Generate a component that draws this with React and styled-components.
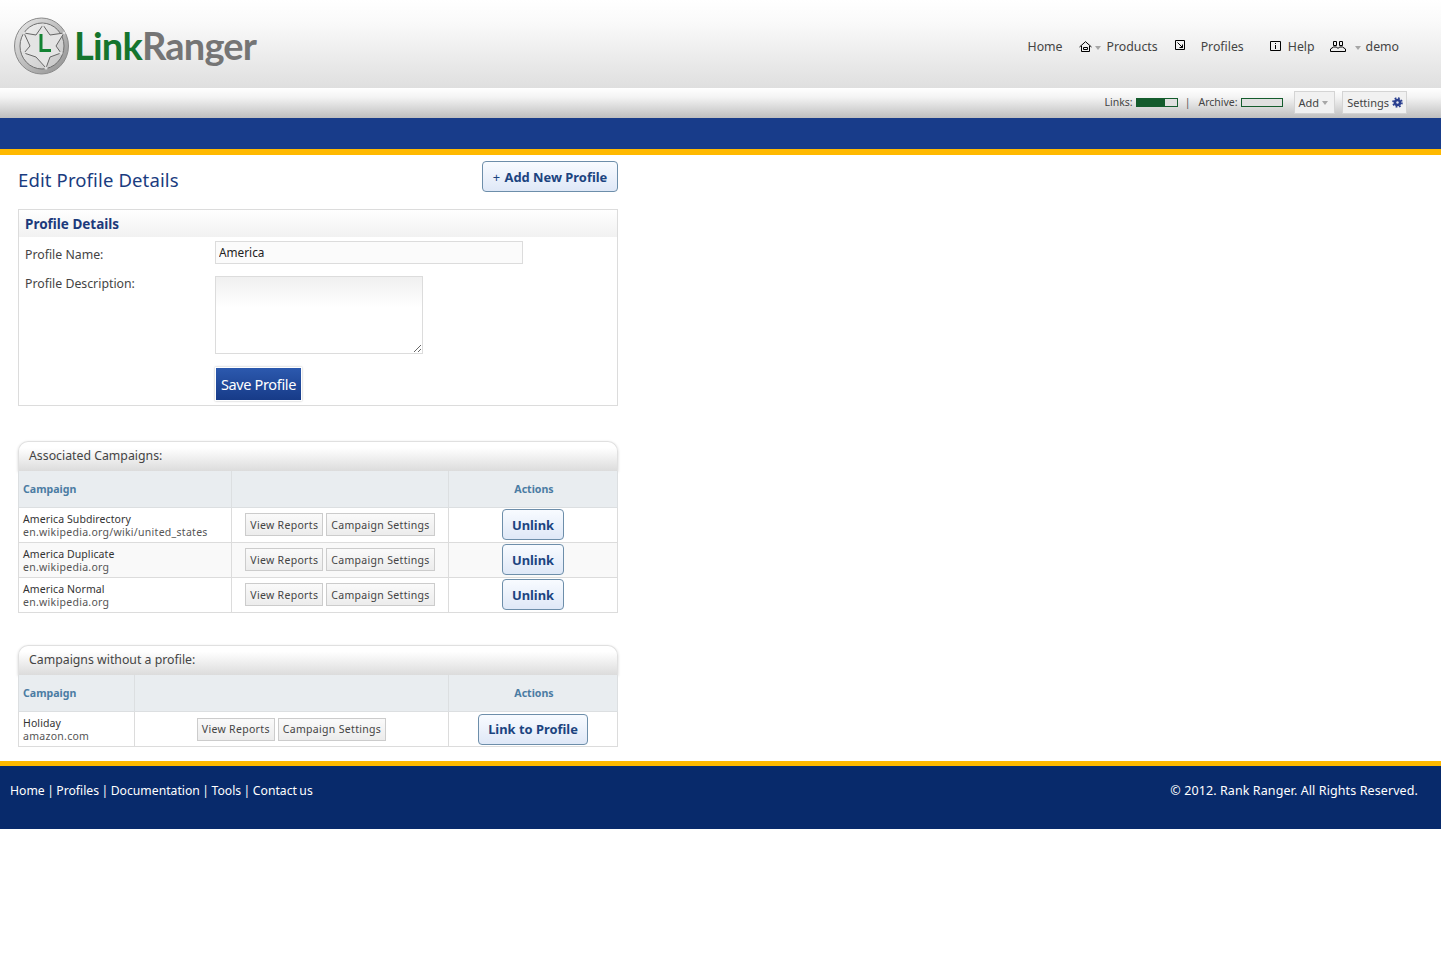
import React from 'react';
import styled, { createGlobalStyle } from 'styled-components';

const GlobalStyle = createGlobalStyle`
  html, body {
    margin: 0;
    padding: 0;
    background: #fff;
    font-family: "Noto Sans", "Open Sans", "Liberation Sans", sans-serif;
    font-size: 12px;
    color: #333;
  }
  * { box-sizing: border-box; }
`;

const associated = [
  { name: 'America Subdirectory', url: 'en.wikipedia.org/wiki/united_states' },
  { name: 'America Duplicate', url: 'en.wikipedia.org' },
  { name: 'America Normal', url: 'en.wikipedia.org' }
];

const Header = styled.header`
  height: 88px;
  padding: 0 42px 0 13px;
  display: flex;
  align-items: flex-start;
  justify-content: space-between;
  background: linear-gradient(#fff 0%, #fafafa 25%, #dfdfdf 100%);
`;

const Logo = styled.div`
  display: flex;
  align-items: center;
  gap: 4px;
  padding-top: 17px;
`;

const LogoText = styled.div`
  font-family: Lato, "Open Sans", sans-serif;
  font-weight: 700;
  font-size: 38px;
  line-height: 44px;
  letter-spacing: -0.8px;
  margin-top: -3px;
  color: #757575;
  span { color: #15752d; }
`;

const Nav = styled.nav`
  display: flex;
  align-items: center;
  height: 20px;
  margin-top: 37px;
`;

const NavLink = styled.a`
  font-size: 12.3px;
  line-height: 20px;
  color: #444;
  margin-left: ${p => p.$left || 0}px;
`;

const NavIcon = styled.svg`
  display: block;
  flex: none;
  margin-left: ${p => p.$left || 0}px;
  margin-top: ${p => p.$top || 0}px;
`;

const Caret = styled.i`
  display: block;
  width: 0;
  height: 0;
  margin-left: ${p => p.$left || 0}px;
  margin-right: ${p => p.$right || 0}px;
  margin-top: 2px;
  border-left: 3px solid transparent;
  border-right: 3px solid transparent;
  border-top: 4px solid #a6a6a6;
`;

const SubBar = styled.div`
  height: 30px;
  padding-right: 34px;
  display: flex;
  align-items: center;
  justify-content: flex-end;
  background: linear-gradient(#fff 0%, #f4f4f4 30%, #bfbfbf 100%);
`;

const Meter = styled.span`
  display: flex;
  align-items: center;
  padding-bottom: 2px;
  font-size: 10.5px;
  color: #444;
  margin-right: ${p => p.$right || 0}px;
`;

const MeterBar = styled.i`
  display: block;
  width: 42px;
  height: 9px;
  margin-left: 3px;
  border: 1px solid #145c2d;
  background: #e0e0e0;
  b {
    display: block;
    height: 100%;
    background: #145c2d;
  }
`;

const Divider = styled.span`
  padding-bottom: 2px;
  font-size: 10.5px;
  color: #555;
  margin-right: 8px;
`;

const BarButton = styled.button`
  display: flex;
  align-items: center;
  height: 23px;
  margin-left: ${p => p.$left || 0}px;
  margin-bottom: 2px;
  padding: 0 ${p => p.$right}px 0 4px;
  border: 1px solid #d4d4d4;
  background: #f1f1f1;
  font: inherit;
  font-size: 11px;
  color: #444;
  svg { display: block; margin-left: 3px; }
`;

const BlueBand = styled.div`
  height: 37px;
  background: #183c8a;
  border-bottom: 6px solid #ffb900;
`;

const Main = styled.main`
  width: 636px;
  padding: 0 18px;
`;

const TitleRow = styled.div`
  height: 54px;
  display: flex;
  align-items: flex-start;
  justify-content: space-between;
`;

const Title = styled.h1`
  margin: 13px 0 0;
  font-size: 18.5px;
  line-height: 24px;
  font-weight: 400;
  letter-spacing: 0.13px;
  color: #1a3c80;
`;

const BlueButton = styled.button`
  height: 31px;
  width: ${p => p.$width}px;
  margin-top: ${p => p.$top || 0}px;
  padding: 0;
  border: 1px solid #6d8eaa;
  border-radius: 4px;
  background: linear-gradient(#f8fbff, #dfe8f7);
  font: inherit;
  font-size: 12.9px;
  font-weight: 700;
  color: #1b4480;
`;

const Plus = styled.span`
  font-weight: 400;
  margin-right: 1px;
`;

const Panel = styled.section`
  height: 197px;
  border: 1px solid #dcdcdc;
`;

const PanelHead = styled.div`
  height: 27px;
  padding-left: 6px;
  font-size: 13.5px;
  line-height: 28px;
  font-weight: 700;
  color: #1c3a7c;
  background: linear-gradient(#fff, #f1f1f1);
`;

const Form = styled.div`
  display: grid;
  grid-template-columns: 190px 1fr;
  padding: 4px 0 0 6px;
  align-items: start;
`;

const Label = styled.label`
  font-size: 12.3px;
  line-height: 18px;
  color: #444;
  margin-top: ${p => p.$top || 0}px;
`;

const TextInput = styled.input`
  display: block;
  width: 308px;
  height: 23px;
  padding: 0 3px 2px;
  border: 1px solid #dcdcdc;
  background: #fbfbfb;
  font: inherit;
  font-size: 11.8px;
  color: #222;
  outline: none;
`;

const TextArea = styled.textarea`
  display: block;
  width: 208px;
  height: 78px;
  margin-top: 12px;
  border: 1px solid #dcdcdc;
  background: linear-gradient(#f0f0f0, #fff 40%);
  outline: none;
`;

const SaveButton = styled.button`
  display: block;
  width: 87px;
  height: 34px;
  margin: 13px 0 0;
  border: 1px solid #fff;
  box-shadow: 0 0 2px #bbb;
  background: linear-gradient(#2c59ae, #173b88);
  font: inherit;
  font-size: 14.5px;
  letter-spacing: -0.35px;
  color: #fff;
  padding: 0;
`;

const Section = styled.section`
  margin-top: ${p => p.$top}px;
`;

const SectionHead = styled.div`
  height: 30px;
  padding-left: 10px;
  font-size: 12.3px;
  line-height: 28px;
  color: #444;
  border: 1px solid #e0e0e0;
  border-bottom: none;
  border-radius: 10px 10px 0 0;
  background: linear-gradient(#fff 20%, #dcdcdc 100%);
  box-shadow: 0 1px 3px rgba(0, 0, 0, 0.18);
`;

const Table = styled.table`
  position: relative;
  width: 599px;
  table-layout: fixed;
  border-collapse: collapse;
`;

const Col = styled.col`
  width: ${p => p.$width}px;
`;

const Th = styled.th`
  height: ${p => p.$height || 36}px;
  padding: 0 ${p => (p.$center ? 3 : 4)}px 0 ${p => (p.$center ? 5 : 4)}px;
  border: 1px solid #dcdfe1;
  border-top: none;
  background: #e9edf0;
  font-size: 10.6px;
  font-weight: 700;
  color: #4b7ca3;
  text-align: ${p => (p.$center ? 'center' : 'left')};
`;

const Tr = styled.tr`
  background: ${p => (p.$alt ? '#f9f9f9' : '#fff')};
`;

const Td = styled.td`
  height: 35px;
  padding: 0 4px;
  border: 1px solid #dcdcdc;
  text-align: ${p => (p.$center ? 'center' : 'left')};
`;

const CellText = styled.div`
  padding-top: 2px;
`;

const CellName = styled.div`
  font-size: 10.5px;
  line-height: 13px;
  letter-spacing: 0.1px;
  color: #333;
`;

const CellUrl = styled.div`
  font-size: 10.5px;
  line-height: 13px;
  letter-spacing: 0.28px;
  color: #555;
`;

const SmallButtons = styled.div`
  display: flex;
  justify-content: center;
  gap: 3px;
`;

const SmallButton = styled.button`
  height: 23px;
  padding: 0 4px;
  border: 1px solid #ccc;
  background: linear-gradient(#fafafa, #ececec);
  font: inherit;
  font-size: 10.5px;
  letter-spacing: 0.32px;
  color: #444;
`;

const Footer = styled.footer`
  height: 68px;
  margin-top: 14px;
  padding: 15px 23px 0 10px;
  display: flex;
  justify-content: space-between;
  border-top: 5px solid #ffb900;
  background: #082a6b;
  line-height: 20px;
  color: #fff;
`;

const FooterLinks = styled.span`
  font-size: 12.2px;
  word-spacing: -0.7px;
`;

const Copyright = styled.span`
  font-size: 12.5px;
  letter-spacing: 0.1px;
`;

const BadgeLogo = () => (
  <svg width="57" height="58" viewBox="0 0 57 58">
    <defs>
      <linearGradient id="rim" x1="0" y1="0" x2="1" y2="1">
        <stop offset="0" stopColor="#ececec" />
        <stop offset="0.5" stopColor="#bdbdbd" />
        <stop offset="1" stopColor="#8d8d8d" />
      </linearGradient>
      <linearGradient id="face" x1="0" y1="0" x2="1" y2="1">
        <stop offset="0" stopColor="#f2f2f2" />
        <stop offset="1" stopColor="#c4c4c4" />
      </linearGradient>
    </defs>
    <ellipse cx="28.500" cy="29" rx="27" ry="28" fill="url(#rim)" stroke="#8a8a8a" />
    <ellipse cx="29" cy="29" rx="22" ry="23" fill="url(#face)" stroke="#6f6f6f" />
    <path
      d="M30 8 L37 18 L51 16 L43 29 L48 36 L37 40 L33 51 L23 40 L11 36 L17 29 L11 16 L23 18 Z"
      fill="#e4e4e4"
      stroke="#666"
      strokeWidth="1"
    />
    <circle cx="30" cy="8" r="1.600" fill="#ddd" />
    <circle cx="51" cy="16" r="1.600" fill="#ddd" />
    <circle cx="48" cy="36" r="1.600" fill="#ddd" />
    <circle cx="33" cy="51" r="1.600" fill="#ddd" />
    <circle cx="11" cy="36" r="1.600" fill="#ddd" />
    <circle cx="11" cy="16" r="1.600" fill="#ddd" />
    <path d="M28 17 V33.500 H38" fill="none" stroke="#128232" strokeWidth="3" />
  </svg>
);

const GearIcon = () => (
  <svg width="11" height="11" viewBox="0 0 11 11">
    <circle cx="5.500" cy="5.500" r="3.800" fill="#2a3f8f" />
    <circle cx="5.500" cy="5.500" r="4.500" fill="none" stroke="#2a3f8f" strokeWidth="1.600" strokeDasharray="1.770 1.770" />
    <circle cx="5.500" cy="5.500" r="1.200" fill="#dfe3ee" />
  </svg>
);

const CampaignRows = ({ rows, unlink }) =>
  rows.map((row, i) => (
    <Tr key={row.name} $alt={i % 2 === 1}>
      <Td>
        <CellText>
          <CellName>{row.name}</CellName>
          <CellUrl>{row.url}</CellUrl>
        </CellText>
      </Td>
      <Td>
        <SmallButtons>
          <SmallButton>View Reports</SmallButton>
          <SmallButton>Campaign Settings</SmallButton>
        </SmallButtons>
      </Td>
      <Td $center>
        {unlink ? (
          <BlueButton $width={62}>Unlink</BlueButton>
        ) : (
          <BlueButton $width={110}>Link to Profile</BlueButton>
        )}
      </Td>
    </Tr>
  ));

export default function App() {
  return (
    <>
      <GlobalStyle />
      <Header>
        <Logo>
          <BadgeLogo />
          <LogoText>
            <span>Link</span>Ranger
          </LogoText>
        </Logo>
        <Nav>
          <NavLink>Home</NavLink>
          <NavIcon $left={16} $top={-2} width="13" height="11" viewBox="0 0 13 11">
            <path d="M.5 6 6.5.7 12.500 6M2.500 5v5.500h8V5M4.500 6.500h4v2h-4z" fill="none" stroke="#000" />
          </NavIcon>
          <Caret $left={3} />
          <NavLink $left={6}>Products</NavLink>
          <NavIcon $left={17} $top={-4} width="10" height="10" viewBox="0 0 10 10">
            <path d="M.500.500h9v9h-9zM2.500 2.500l5 5M7.500 4.500v3h-3" fill="none" stroke="#000" />
          </NavIcon>
          <NavLink $left={16}>Profiles</NavLink>
          <NavIcon $left={26} $top={-2} width="11" height="10" viewBox="0 0 11 10">
            <path d="M.500.500h10v9H.500zM5.500 2v1M5.500 4v4" fill="none" stroke="#000" />
          </NavIcon>
          <NavLink $left={7}>Help</NavLink>
          <NavIcon $left={15} $top={-2} width="16" height="11" viewBox="0 0 16 11">
            <path d="M3.500.500h3v4h-3zM9.500.500h3v4h-3zM.500 10.500V8l3-2h3l1.500 1.500L9.500 6h3l3 2v2.500z" fill="none" stroke="#000" />
          </NavIcon>
          <Caret $left={9} $right={5} />
          <NavLink>demo</NavLink>
        </Nav>
      </Header>
      <SubBar>
        <Meter $right={7}>
          Links:
          <MeterBar>
            <b style={{ width: '72%' }} />
          </MeterBar>
        </Meter>
        <Divider>|</Divider>
        <Meter>
          Archive:
          <MeterBar />
        </Meter>
        <BarButton $left={11} $right={6}>
          Add
          <Caret $left={3} />
        </BarButton>
        <BarButton $left={7} $right={3}>
          Settings
          <GearIcon />
        </BarButton>
      </SubBar>
      <BlueBand />
      <Main>
        <TitleRow>
          <Title>Edit Profile Details</Title>
          <BlueButton $width={136} $top={6}><Plus>+</Plus> Add New Profile</BlueButton>
        </TitleRow>
        <Panel>
          <PanelHead>Profile Details</PanelHead>
          <Form>
            <Label $top={5}>Profile Name:</Label>
            <TextInput defaultValue="America" />
            <Label $top={11}>Profile Description:</Label>
            <TextArea />
            <span />
            <SaveButton>Save Profile</SaveButton>
          </Form>
        </Panel>
        <Section $top={35}>
          <SectionHead>Associated Campaigns:</SectionHead>
          <Table>
            <colgroup>
              <Col $width={213} />
              <Col $width={217} />
              <Col $width={169} />
            </colgroup>
            <thead>
              <tr>
                <Th>Campaign</Th>
                <Th />
                <Th $center>Actions</Th>
              </tr>
            </thead>
            <tbody>
              <CampaignRows rows={associated} unlink />
            </tbody>
          </Table>
        </Section>
        <Section $top={32}>
          <SectionHead>Campaigns without a profile:</SectionHead>
          <Table>
            <colgroup>
              <Col $width={116} />
              <Col $width={314} />
              <Col $width={169} />
            </colgroup>
            <thead>
              <tr>
                <Th $height={37}>Campaign</Th>
                <Th $height={37} />
                <Th $height={37} $center>Actions</Th>
              </tr>
            </thead>
            <tbody>
              <CampaignRows rows={[{ name: 'Holiday', url: 'amazon.com' }]} />
            </tbody>
          </Table>
        </Section>
      </Main>
      <Footer>
        <FooterLinks>Home | Profiles | Documentation | Tools | Contact us</FooterLinks>
        <Copyright>© 2012. Rank Ranger. All Rights Reserved.</Copyright>
      </Footer>
    </>
  );
}
